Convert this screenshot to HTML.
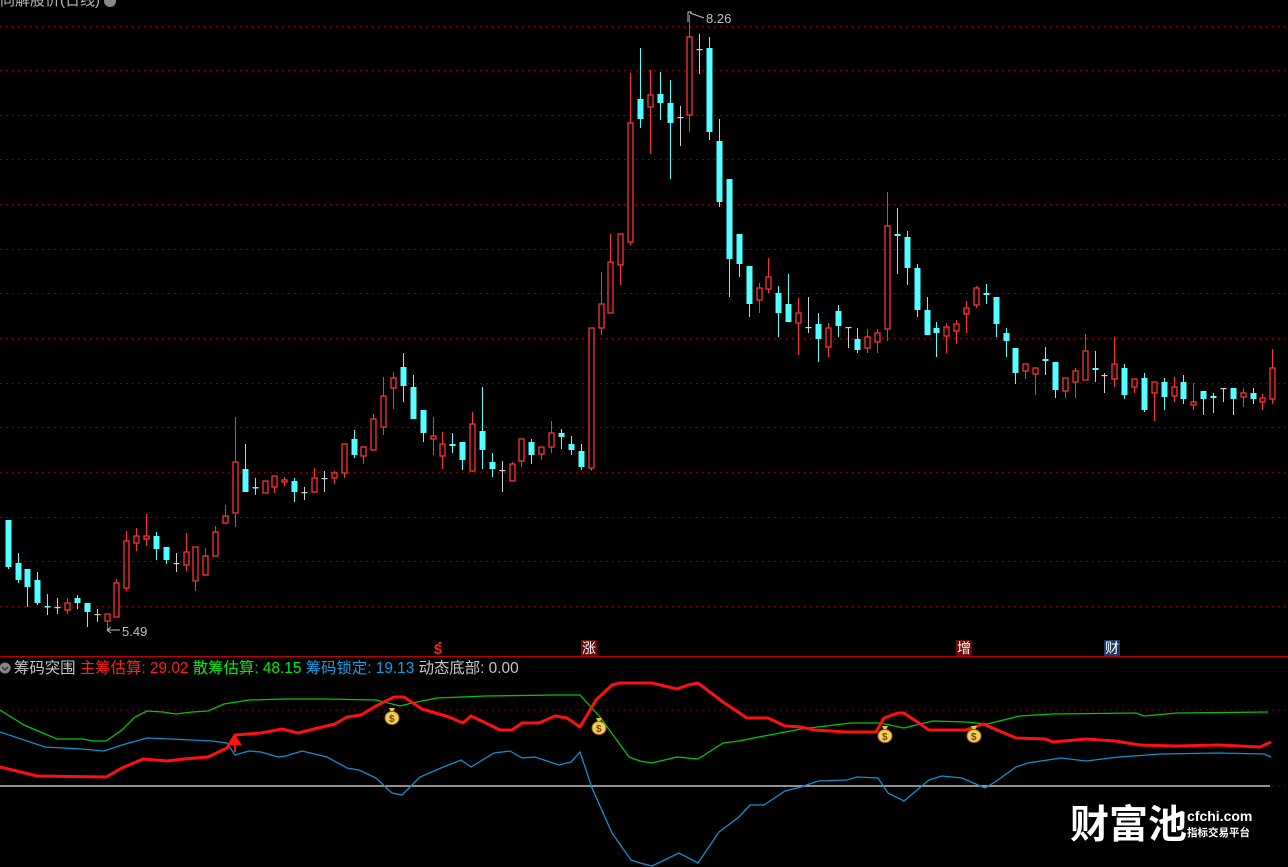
<!DOCTYPE html>
<html><head><meta charset="utf-8"><style>
html,body{margin:0;padding:0;background:#000;width:1288px;height:867px;overflow:hidden}
svg{position:absolute;left:0;top:0}
.t{font-family:"Liberation Sans","Noto Sans CJK SC",sans-serif}
</style></head><body>
<svg id="s" width="1288" height="867" xmlns="http://www.w3.org/2000/svg">
<g id="grid"></g>
<g id="cand"></g>
<text x="0" y="5" class="t" font-size="15" fill="#b8b8b8">同解股价(日线)</text>
<circle cx="110" cy="1" r="6" fill="#888"/>
<path d="M688 22 V12 H692 M690 13 L704 18" stroke="#c0c0c0" fill="none"/>
<text x="706" y="23" class="t" font-size="13" fill="#c0c0c0">8.26</text>
<path d="M107 630 H120 M107 630 l4 -3 M107 630 l4 3" stroke="#c0c0c0" fill="none"/>
<text x="122" y="636" class="t" font-size="13" fill="#c0c0c0">5.49</text>
<line x1="0" y1="656.5" x2="1288" y2="656.5" stroke="#c00000" stroke-width="1"/>
<text x="434" y="654" class="t" font-size="14" fill="#ff2020" font-weight="bold">$</text>
<path d="M440 641 l-2 3 h4z" fill="#ff2020"/>
<rect x="581" y="640" width="16" height="16" fill="#6a0a0a"/>
<text x="582" y="653" class="t" font-size="14" fill="#fff">涨</text>
<rect x="956" y="640" width="16" height="16" fill="#6a0a0a"/>
<text x="957" y="653" class="t" font-size="14" fill="#fff">增</text>
<rect x="1104" y="640" width="16" height="16" fill="#1a3a6a"/>
<text x="1105" y="653" class="t" font-size="14" fill="#fff">财</text>
<circle cx="5" cy="668" r="5.5" fill="#888"/>
<path d="M2 667 l3 3 l3 -3" stroke="#333" fill="none" stroke-width="1.5"/>
<text x="14" y="673" class="t" font-size="15.4"><tspan fill="#c8c8c8">筹码突围 </tspan><tspan fill="#ff2020">主筹估算: 29.02 </tspan><tspan fill="#00ee00">散筹估算: 48.15 </tspan><tspan fill="#10a0e0">筹码锁定: 19.13 </tspan><tspan fill="#c8c8c8">动态底部: 0.00</tspan></text>
<line x1="0" y1="710" x2="1288" y2="710" stroke="#a00000" stroke-dasharray="1.5 4.5"/>
<line x1="0" y1="786" x2="1270" y2="786" stroke="#c0c0c0" stroke-width="1.5"/>
<line x1="1272" y1="786" x2="1288" y2="786" stroke="#a00000" stroke-dasharray="1.5 4.5"/>
<polyline fill="none" stroke="#00c800" stroke-width="1.3" points="0,710 24,725 57,739 82,739 94,741 106,741 122,730 135,717 147,711 163,712 176,714 192,712 208,711 224,704 249,700 286,699 327,699 376,700 400,706 412,703 437,698 486,696 555,695 580,695 600,717 629,757 640,761 652,763 677,757 698,759 723,743 739,741 764,736 801,729 851,723 880,723 904,728 933,721 966,722 987,724 1020,716 1053,714 1136,713 1144,716 1177,713 1268,712"/>
<polyline fill="none" stroke="#1090d0" stroke-width="1.3" points="0,732 45,747 82,749 104,751 122,745 147,738 171,739 212,741 227,743 235,755 249,751 261,752 278,757 286,756 302,751 327,757 347,768 359,770 376,778 392,793 402,795 420,777 441,768 461,760 471,767 494,753 510,751 522,758 535,757 559,765 571,762 580,752 592,788 612,833 631,860 640,863 652,866 679,853 698,863 719,832 739,817 750,805 764,805 785,791 801,787 818,781 847,780 857,777 878,778 888,793 904,801 929,780 942,776 962,778 985,788 995,782 1016,767 1028,763 1061,758 1086,761 1119,757 1161,754 1219,753 1264,754 1271,757"/>
<polyline fill="none" stroke="#ff1010" stroke-width="3" stroke-linejoin="round" points="0,767 37,776 106,777 122,768 143,759 167,761 184,759 208,757 227,748 235,735 261,733 282,729 298,733 310,730 335,724 347,717 361,715 376,706 394,697 404,697 422,709 449,717 463,723 471,716 490,725 500,730 512,730 522,723 539,723 555,716 567,718 580,727 596,700 612,685 620,683 652,683 677,689 688,685 698,683 723,702 747,718 768,718 785,726 801,727 814,730 847,732 876,732 884,718 898,713 904,713 929,730 966,730 983,724 1016,738 1045,739 1053,742 1086,739 1115,741 1140,745 1177,746 1219,745 1260,747 1271,742"/>
<path d="M235 752 V741 M230 744 L235 736 L240 744 Z" stroke="#ff1010" fill="#ff1010" stroke-width="2"/>
<g id="bags"></g>
<text x="1070" y="838" font-family="'Noto Sans CJK SC',sans-serif" font-size="39" font-weight="bold" fill="#fff">财富池</text>
<text x="1187" y="821" class="t" font-size="14" font-weight="bold" fill="#fff">cfchi.com</text>
<text x="1187" y="836" font-family="'Noto Sans CJK SC',sans-serif" font-size="10.5" font-weight="bold" fill="#fff">指标交易平台</text>
</svg>
<script>
var NS="http://www.w3.org/2000/svg";
function el(p,t,a){var e=document.createElementNS(NS,t);for(var k in a)e.setAttribute(k,a[k]);p.appendChild(e);return e;}
var g=document.getElementById('grid');
for(var y=25.5;y<640;y+=44.65){el(g,'line',{x1:0,y1:Math.round(y)+.5,x2:1288,y2:Math.round(y)+.5,stroke:'#a00000','stroke-dasharray':'1.5 4.5'});}
var D=[
[520,567,520,569,'c'],[563,580,553,583,'c'],[569,587,569,607,'c'],[580,603,572,605,'c'],[606,607,594,615,'c'],[607,608,598,614,'w'],[603,610,598,614,'r'],[598,603,595,609,'c'],[603,612,603,627,'c'],[614,615,609,622,'w'],[614,621,614,629,'r'],[583,617,579,617,'r'],[541,588,531,591,'r'],[536,543,528,551,'r'],[536,539,514,546,'r'],[536,549,532,560,'c'],[547,560,547,564,'c'],[563,564,553,572,'w'],[552,565,533,571,'r'],[547,581,547,591,'r'],[556,575,548,575,'r'],[532,556,526,556,'r'],[516,523,505,524,'r'],[462,513,417,527,'r'],[469,492,444,492,'c'],[487,488,478,495,'c'],[481,493,481,493,'r'],[476,487,476,493,'r'],[480,482,477,486,'r'],[481,492,478,502,'c'],[492,493,487,500,'w'],[478,492,468,492,'r'],
[478,479,471,492,'w'],[473,478,471,484,'r'],[444,473,444,478,'r'],[439,455,430,458,'c'],[447,456,446,464,'r'],[419,450,414,450,'r'],[396,427,377,435,'r'],[378,388,372,409,'r'],[367,386,353,402,'c'],[387,419,375,419,'c'],[410,433,410,442,'c'],[436,439,417,455,'r'],[444,456,432,469,'r'],[444,446,433,453,'c'],[442,460,442,470,'c'],[424,471,412,472,'r'],[431,450,387,469,'c'],[462,469,453,477,'c'],[470,471,461,492,'w'],[464,481,462,481,'r'],[439,461,439,467,'r'],[442,455,439,464,'c'],[447,454,447,460,'r'],[433,447,421,453,'r'],[433,437,429,449,'c'],[444,450,436,455,'c'],[451,467,444,470,'c'],
[328,468,328,471,'r'],[304,328,272,335,'r'],[262,313,234,313,'r'],[234,265,234,285,'r'],[123,242,73,245,'r'],[99,119,48,128,'c'],[95,107,70,154,'r'],[94,103,72,120,'c'],[103,123,80,179,'c'],[117,118,106,146,'w'],[37,115,15,132,'r'],[49,50,34,74,'w'],[48,132,37,140,'c'],[141,202,119,207,'c'],[179,259,179,297,'c'],[234,264,234,277,'c'],[266,304,266,317,'c'],[288,300,283,313,'r'],[277,289,258,293,'r'],[293,313,286,337,'c'],[304,322,274,322,'c'],[313,323,298,355,'r'],[327,328,297,333,'w'],[324,339,313,362,'c'],[328,347,323,357,'r'],[311,326,305,337,'c'],[327,328,327,348,'w'],[339,350,328,353,'c'],[337,348,329,353,'r'],[333,342,329,353,'r'],
[226,329,192,341,'r'],[234,236,208,274,'c'],[237,268,231,285,'c'],[268,310,264,317,'c'],[310,335,297,335,'c'],[328,333,322,357,'c'],[327,336,323,353,'r'],[324,331,320,344,'r'],[308,314,301,333,'r'],[288,305,286,308,'r'],[293,295,284,304,'c'],[297,324,297,337,'c'],[333,341,328,357,'c'],[348,373,348,384,'c'],[364,371,364,379,'r'],[368,374,368,395,'r'],[359,361,347,375,'c'],[362,390,362,398,'c'],[378,391,378,398,'r'],[371,382,368,398,'r'],[351,380,334,380,'r'],[368,370,351,382,'c'],[375,377,373,393,'w'],[364,379,337,387,'r'],[368,395,364,399,'c'],[379,387,379,393,'r'],[378,410,373,412,'c'],[382,393,382,421,'r'],[382,397,378,410,'c'],[387,396,377,402,'r'],[382,399,375,404,'c'],[402,405,383,410,'r'],[391,399,391,415,'c'],[396,398,393,413,'c'],[388,389,388,402,'w'],[388,399,388,415,'c'],[393,397,388,407,'r'],[393,399,388,404,'c'],[398,402,394,410,'r'],[368,399,349,404,'r']];
var c=document.getElementById('cand');
for(var i=0;i<D.length;i++){var d=D[i],x=Math.round(7.7+9.88*i)+.5,t=d[4];
var col=t=='r'?'#ff3232':t=='c'?'#54ffff':'#d0d0d0';
el(c,'line',{x1:x,y1:d[2],x2:x,y2:d[3],stroke:col,'stroke-width':1});
if(t=='r'){if(d[1]-d[0]<2){el(c,'rect',{x:x-3,y:d[0]-.5,width:6,height:1.5,fill:col});}else el(c,'rect',{x:x-2.5,y:d[0],width:5,height:d[1]-d[0],fill:'#000',stroke:col,'stroke-width':1.3});}
else if(t=='c'){var h=Math.max(1.5,d[1]-d[0]);el(c,'rect',{x:x-3,y:d[0],width:6,height:h,fill:col});}
else{el(c,'rect',{x:x-3,y:d[0],width:6,height:1.2,fill:col});}
}
var b=document.getElementById('bags');
[[392,717],[599,727],[885,735],[974,735]].forEach(function(p){
el(b,'path',{d:'M'+(p[0]-3)+' '+(p[1]-9)+' h6 l-1.5 3 h-3z',fill:'#e8c040'});
el(b,'ellipse',{cx:p[0],cy:p[1]+1,rx:7,ry:6.5,fill:'#f0d060',stroke:'#a07010','stroke-width':1});
var tt=el(b,'text',{x:p[0]-3,y:p[1]+5,'font-size':10,'font-weight':'bold',fill:'#804000','font-family':'Liberation Sans'});tt.textContent='$';
});
</script>
</body></html>
